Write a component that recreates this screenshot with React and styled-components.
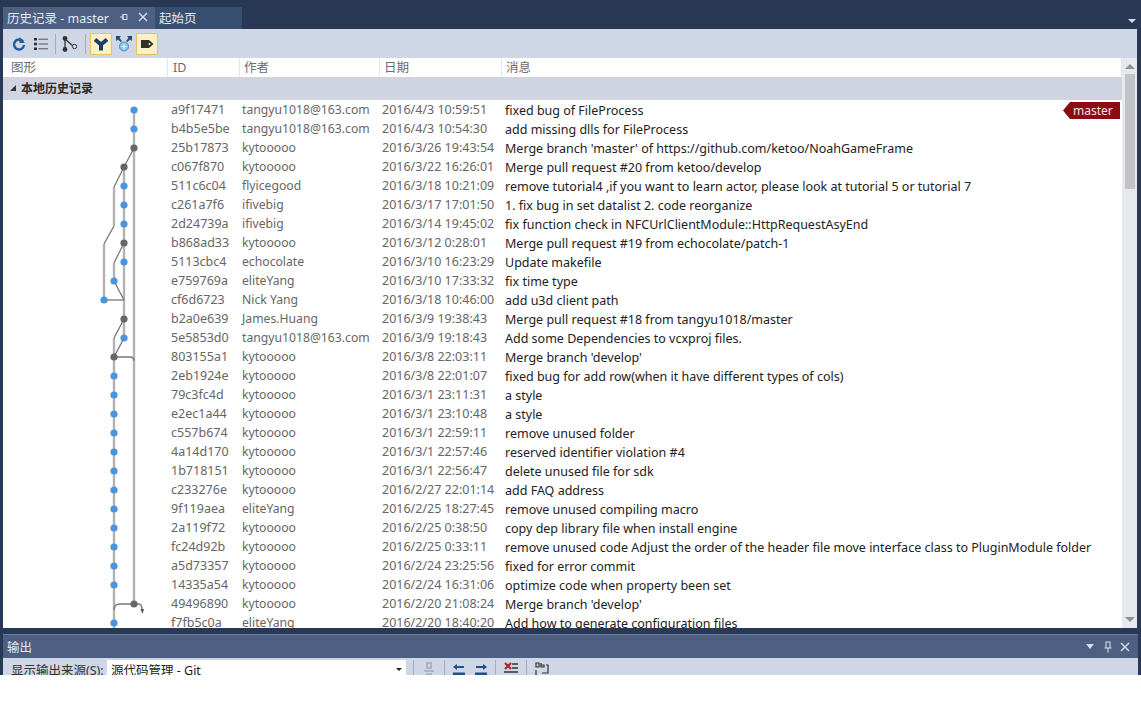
import React from 'react';
import styled, { createGlobalStyle } from 'styled-components';

const GlobalStyle = createGlobalStyle`
  html, body {
    margin: 0;
    background: #fff;
  }
  body {
    font-family: "Noto Sans", "Noto Sans CJK SC", sans-serif;
    font-size: 13px;
  }
`

const commits = [
  ['a9f17471', 'tangyu1018@163.com', '2016/4/3 10:59:51', 'fixed bug of FileProcess'],
  ['b4b5e5be', 'tangyu1018@163.com', '2016/4/3 10:54:30', 'add missing dlls for FileProcess'],
  ['25b17873', 'kytooooo', '2016/3/26 19:43:54', "Merge branch 'master' of https://github.com/ketoo/NoahGameFrame"],
  ['c067f870', 'kytooooo', '2016/3/22 16:26:01', 'Merge pull request #20 from ketoo/develop'],
  ['511c6c04', 'flyicegood', '2016/3/18 10:21:09', 'remove tutorial4 ,if you want to learn actor, please look at tutorial 5 or tutorial 7'],
  ['c261a7f6', 'ifivebig', '2016/3/17 17:01:50', '1. fix bug in set datalist 2. code reorganize'],
  ['2d24739a', 'ifivebig', '2016/3/14 19:45:02', 'fix function check in NFCUrlClientModule::HttpRequestAsyEnd'],
  ['b868ad33', 'kytooooo', '2016/3/12 0:28:01', 'Merge pull request #19 from echocolate/patch-1'],
  ['5113cbc4', 'echocolate', '2016/3/10 16:23:29', 'Update makefile'],
  ['e759769a', 'eliteYang', '2016/3/10 17:33:32', 'fix time type'],
  ['cf6d6723', 'Nick Yang', '2016/3/18 10:46:00', 'add u3d client path'],
  ['b2a0e639', 'James.Huang', '2016/3/9 19:38:43', 'Merge pull request #18 from tangyu1018/master'],
  ['5e5853d0', 'tangyu1018@163.com', '2016/3/9 19:18:43', 'Add some Dependencies to vcxproj files.'],
  ['803155a1', 'kytooooo', '2016/3/8 22:03:11', "Merge branch 'develop'"],
  ['2eb1924e', 'kytooooo', '2016/3/8 22:01:07', 'fixed bug for add row(when it have different types of cols)'],
  ['79c3fc4d', 'kytooooo', '2016/3/1 23:11:31', 'a style'],
  ['e2ec1a44', 'kytooooo', '2016/3/1 23:10:48', 'a style'],
  ['c557b674', 'kytooooo', '2016/3/1 22:59:11', 'remove unused folder'],
  ['4a14d170', 'kytooooo', '2016/3/1 22:57:46', 'reserved identifier violation #4'],
  ['1b718151', 'kytooooo', '2016/3/1 22:56:47', 'delete unused file for sdk'],
  ['c233276e', 'kytooooo', '2016/2/27 22:01:14', 'add FAQ address'],
  ['9f119aea', 'eliteYang', '2016/2/25 18:27:45', 'remove unused compiling macro'],
  ['2a119f72', 'kytooooo', '2016/2/25 0:38:50', 'copy dep library file when install engine'],
  ['fc24d92b', 'kytooooo', '2016/2/25 0:33:11', 'remove unused code Adjust the order of the header file move interface class to PluginModule folder'],
  ['a5d73357', 'kytooooo', '2016/2/24 23:25:56', 'fixed for error commit'],
  ['14335a54', 'kytooooo', '2016/2/24 16:31:06', 'optimize code when property been set'],
  ['49496890', 'kytooooo', '2016/2/20 21:08:24', "Merge branch 'develop'"],
  ['f7fb5c0a', 'eliteYang', '2016/2/20 18:40:20', 'Add how to generate configuration files'],
]

// x position and colour of the node on each row of the graph
const nodes = [
  [134, 'b'], [134, 'b'], [134, 'g'], [124, 'g'], [124, 'b'], [124, 'b'], [124, 'b'], [124, 'g'],
  [124, 'b'], [114, 'b'], [104, 'b'], [124, 'g'], [124, 'b'], [114, 'g'], [114, 'b'], [114, 'b'],
  [114, 'b'], [114, 'b'], [114, 'b'], [114, 'b'], [114, 'b'], [114, 'b'], [114, 'b'], [114, 'b'],
  [114, 'b'], [114, 'b'], [134, 'g'], [114, 'b'],
]

const Window = styled.div`
  height: 675px;
  background: #293955;
  display: flex;
  flex-direction: column;
  overflow: hidden;
`

const TabStrip = styled.div`
  height: 29px;
  padding: 7px 5px 0 3px;
  box-sizing: border-box;
  display: flex;
  align-items: stretch;
`

const Tab = styled.div`
  width: ${props => props.$width}px;
  background: ${props => props.$active ? '#4d6082' : '#364e6f'};
  color: #e4e9f2;
  padding: 0 0 2px 4px;
  display: flex;
  align-items: center;
  box-sizing: border-box;
  font-size: 12.5px;
  white-space: nowrap;
`

const TabTitle = styled.span`
  flex: 1;
`

const TabIcon = styled.svg`
  width: 12px;
  height: 12px;
  margin-right: ${props => props.$gap || 0}px;
  flex: none;
`

const StripMenu = styled.div`
  margin-left: auto;
  align-self: flex-end;
  margin-bottom: 6px;
  width: 0;
  height: 0;
  border-left: 4px solid transparent;
  border-right: 4px solid transparent;
  border-top: 4px solid #d5deee;
`

const DocPanel = styled.div`
  height: 599px;
  margin: 0 4px 0 3px;
  background: #cfd6e5;
  display: flex;
  flex-direction: column;
`

const Toolbar = styled.div`
  height: 29px;
  flex: none;
  padding-left: 5px;
  display: flex;
  align-items: center;
  background: #cfd6e5;
`

const ToolButton = styled.div`
  width: ${props => props.$width || 22}px;
  height: 22px;
  display: flex;
  align-items: center;
  justify-content: center;
  box-sizing: border-box;
  border: 1px solid ${props => props.$on ? '#e5c365' : 'transparent'};
  background: ${props => props.$on ? '#fdf0c4' : 'transparent'};
`

const ToolSep = styled.div`
  width: 1px;
  flex: none;
  height: ${props => props.$height ?? 20}px;
  margin: 0 ${props => props.$gap ?? 3}px;
  background: #a4adbf;
`

const Main = styled.div`
  flex: 1;
  min-height: 0;
  display: flex;
`

const Table = styled.div`
  flex: 1;
  min-width: 0;
  background: #fff;
  display: flex;
  flex-direction: column;
`

const HeaderRow = styled.div`
  height: 19px;
  flex: none;
  display: grid;
  grid-template-columns: 165px 72px 140px 122px 1fr;
  background: #fff;
`

const HeaderCell = styled.div`
  padding-left: ${props => props.$pad || 4}px;
  line-height: 19px;
  color: #6d6d6d;
  border-right: 1px solid #e3e5ea;
  font-size: 12.5px;
`

const GroupRow = styled.div`
  height: 23px;
  flex: none;
  padding: 0 0 2px 6px;
  box-sizing: border-box;
  display: flex;
  align-items: center;
  gap: 4px;
  background: #d0d3e0;
  color: #2b2b2b;
  font-weight: 700;
  font-size: 12px;
`

const GroupArrow = styled.svg`
  width: 8px;
  height: 8px;
`

const Body = styled.div`
  flex: 1;
  min-height: 0;
  display: flex;
  overflow: hidden;
`

const Graph = styled.svg`
  width: 165px;
  height: 532px;
  flex: none;
`

const Rows = styled.div`
  flex: 1;
  min-width: 0;
  position: relative;
`

const Row = styled.div`
  height: 19px;
  display: grid;
  grid-template-columns: 71px 140px 123px 1fr;
  align-items: center;
  padding-left: 3px;
  white-space: nowrap;
  font-size: 12.5px;
  color: #666;
`

const Author = styled.span`
  font-size: 12.2px;
`

const Message = styled.span`
  margin-top: 2px;
  color: #222;
  font-size: 12.5px;
`

const RefBadge = styled.div`
  position: absolute;
  top: 2px;
  right: 2px;
  width: 57px;
  height: 17px;
  padding-left: 10px;
  box-sizing: border-box;
  line-height: 17px;
  font-size: 12px;
  color: #f4e4e4;
  background: #8c0a12;
  clip-path: polygon(0 50%, 7px 0, 100% 0, 100% 100%, 7px 100%);
`

const Scrollbar = styled.div`
  width: 15px;
  flex: none;
  background: #e8e9ee;
  display: flex;
  flex-direction: column;
  align-items: center;
`

const ScrollArrow = styled.div`
  width: 0;
  height: 0;
  margin: ${props => props.$up ? '6px 0 5px' : 'auto 0 6px'};
  border-left: 5px solid transparent;
  border-right: 5px solid transparent;
  border-${props => props.$up ? 'bottom' : 'top'}: 5px solid #8e8e96;
`

const ScrollThumb = styled.div`
  width: 10px;
  height: 115px;
  background: #c2c3c9;
`

const OutputPanel = styled.div`
  margin: 6px 3px 0 3px;
  flex: 1;
  min-height: 0;
  display: flex;
  flex-direction: column;
`

const OutputTitle = styled.div`
  height: 24px;
  flex: none;
  padding: 0 7px 0 4px;
  display: flex;
  align-items: center;
  gap: 5px;
  box-sizing: border-box;
  background: #4d6082;
  border-top: 1px solid #6f80a0;
  color: #e4e9f2;
  font-size: 12.5px;
`

const OutputName = styled.span`
  flex: 1;
`

const TitleMenu = styled.svg`
  width: 10px;
  height: 6px;
  margin-right: 2px;
`

const OutputBar = styled.div`
  flex: 1;
  background: #cfd6e5;
  padding-left: 8px;
  padding-top: 2px;
  display: flex;
  align-items: flex-start;
  overflow: hidden;
  color: #333;
  font-size: 12.5px;
`

const OutputLabel = styled.span`
  width: 96px;
  line-height: 21px;
  white-space: nowrap;
`

const Combo = styled.div`
  width: 299px;
  height: 20px;
  padding: 0 4px;
  box-sizing: border-box;
  background: #fff;
  display: flex;
  align-items: flex-start;
  justify-content: space-between;
  line-height: 21px;
  color: #222;
`

const ComboArrow = styled.div`
  margin-top: 8px;
  width: 0;
  height: 0;
  border-left: 3px solid transparent;
  border-right: 3px solid transparent;
  border-top: 3px solid #222;
`

const OutputTools = styled.div`
  margin-left: 7px;
  display: flex;
  align-items: flex-start;
`

const OutputIcon = styled.svg`
  width: 16px;
  height: 16px;
  flex: none;
  margin: 1px ${props => props.$gap ?? 7}px 0;
`

const IconGroup = styled.div`
  padding: 0 6px;
  display: flex;
  gap: 6px;
`

const CommitGraph = () => {
  const track = '#b2b2b2'
  const link = '#777'
  return (
    <Graph viewBox="3 100 165 532">
      <g fill="none" stroke={track} strokeWidth="2.4">
        <path d="M134 110V604" />
        <path d="M124 167V338" />
        <path d="M114 187V226" />
        <path d="M104 244V300" />
        <path d="M114 263V281" />
        <path d="M114 338V640" />
      </g>
      <g fill="none" stroke={link} strokeWidth="1.3">
        <path d="M134 148L124 167L114 187" />
        <path d="M114 226L104 244" />
        <path d="M124 243L114 263" />
        <path d="M114 281L124 300" />
        <path d="M104 300H124" />
        <path d="M124 319L114 338" />
        <path d="M124 338L114 357" />
        <path d="M114 357H130Q134 357 134 361" />
        <path d="M114 610Q114 604 120 604H134" />
        <path d="M134 604H138Q142 604 142 609" />
      </g>
      <path d="M140.500 609h3.500l-1.500 5z" fill="#555" />
      {nodes.map(([x, kind], i) => (
        <circle key={i} cx={x} cy={110 + i * 19} r="3.6" fill={kind === 'b' ? '#4a94de' : '#666'} />
      ))}
    </Graph>
  )
}

const App = () => {
  return (
    <Window>
      <GlobalStyle />
      <TabStrip>
        <Tab $active $width={152}>
          <TabTitle>历史记录 - master</TabTitle>
          <TabIcon viewBox="0 0 12 12" $gap={7}>
            <path d="M2 6h3M5 3.500h4v5H5zM5 3v6" fill="none" stroke="#d8dfec" strokeWidth="1" />
          </TabIcon>
          <TabIcon viewBox="0 0 12 12" $gap={6}>
            <path d="M2 2l8 8M10 2l-8 8" fill="none" stroke="#d8dfec" strokeWidth="1.4" />
          </TabIcon>
        </Tab>
        <Tab $width={87}>起始页</Tab>
        <StripMenu />
      </TabStrip>
      <DocPanel>
        <Toolbar>
          <ToolButton>
            <svg width="16" height="16" viewBox="0 0 16 16">
              <path d="M12 5.500A5 5 0 1 0 13 9" fill="none" stroke="#1f5c9e" strokeWidth="2.4" />
              <path d="M8.500 1v6h5.500z" fill="#1f5c9e" />
            </svg>
          </ToolButton>
          <ToolButton>
            <svg width="16" height="16" viewBox="0 0 16 16">
              <path d="M1 2h3v2.500H1zM1 6.800h3v2.500H1zM1 11.500h3V14H1z" fill="#2b2b2b" />
              <path d="M5.500 3.200H15M5.500 8H15M5.500 12.800H15" stroke="#555" strokeWidth="1" />
            </svg>
          </ToolButton>
          <ToolSep />
          <ToolButton>
            <svg width="18" height="18" viewBox="0 0 18 18">
              <path d="M4 3v12M4 4l8 7" fill="none" stroke="#333" strokeWidth="1.3" />
              <circle cx="4" cy="3.500" r="2.400" fill="#333" />
              <circle cx="4" cy="14.500" r="2.400" fill="#333" />
              <circle cx="13.500" cy="11.500" r="2.200" fill="#d4dae7" stroke="#333" />
            </svg>
          </ToolButton>
          <ToolSep $gap={4} />
          <ToolButton $on>
            <svg width="18" height="16" viewBox="0 0 18 16">
              <path d="M3 3.500L9 8.500L15 3.500M9 8V14.500" fill="none" stroke="#173d68" strokeWidth="4" />
            </svg>
          </ToolButton>
          <ToolButton $width={24}>
            <svg width="18" height="18" viewBox="0 0 18 18">
              <path d="M1 1h5L4.500 3 7 6 5.500 7 3 4.500 1 6z" fill="#264a6e" />
              <path d="M17 1h-5l1.500 2L11 6l1.500 1L15 4.500 17 6z" fill="#264a6e" />
              <circle cx="9" cy="11.500" r="4.500" fill="#8fc7ea" stroke="#3f8ec9" />
              <path d="M6.500 11.500h5M9 9v5" stroke="#e8f4fb" strokeWidth="1" />
            </svg>
          </ToolButton>
          <ToolButton $on>
            <svg width="14" height="10" viewBox="0 0 14 10">
              <path d="M1 1h8l4.500 4L9 9H1z" fill="#33302a" />
              <circle cx="9.500" cy="5" r="1" fill="#fdf0c4" />
            </svg>
          </ToolButton>
        </Toolbar>
        <Main>
          <Table>
            <HeaderRow>
              <HeaderCell $pad={8}>图形</HeaderCell>
              <HeaderCell $pad={5}>ID</HeaderCell>
              <HeaderCell>作者</HeaderCell>
              <HeaderCell>日期</HeaderCell>
              <HeaderCell>消息</HeaderCell>
            </HeaderRow>
            <GroupRow>
              <GroupArrow viewBox="0 0 8 8">
                <path d="M7 1v6H1z" fill="#333" />
              </GroupArrow>
              本地历史记录
            </GroupRow>
            <Body>
              <CommitGraph />
              <Rows>
                {commits.map(c => (
                  <Row key={c[0]}>
                    <span>{c[0]}</span>
                    <Author>{c[1]}</Author>
                    <span>{c[2]}</span>
                    <Message>{c[3]}</Message>
                  </Row>
                ))}
                <RefBadge>master</RefBadge>
              </Rows>
            </Body>
          </Table>
          <Scrollbar>
            <ScrollArrow $up />
            <ScrollThumb />
            <ScrollArrow />
          </Scrollbar>
        </Main>
      </DocPanel>
      <OutputPanel>
        <OutputTitle>
          <OutputName>输出</OutputName>
          <TitleMenu viewBox="0 0 10 6">
            <path d="M1 0h8L5 5z" fill="#d8dfec" />
          </TitleMenu>
          <svg width="12" height="12" viewBox="0 0 12 12">
            <path d="M4 1h4v6H4zM2.500 7h7M6 7v4.500" fill="none" stroke="#d8dfec" strokeWidth="1.1" />
          </svg>
          <svg width="12" height="12" viewBox="0 0 12 12">
            <path d="M2 2l8 8M10 2l-8 8" fill="none" stroke="#d8dfec" strokeWidth="1.4" />
          </svg>
        </OutputTitle>
        <OutputBar>
          <OutputLabel>显示输出来源(S):</OutputLabel>
          <Combo>
            <span>源代码管理 - Git</span>
            <ComboArrow />
          </Combo>
          <OutputTools>
            <ToolSep $height={17} $gap={0} />
            <OutputIcon viewBox="0 0 16 16">
              <path d="M6 2h4v5H6zM3 10h10M5 13h6" fill="none" stroke="#a2a8b3" strokeWidth="1.5" />
            </OutputIcon>
            <ToolSep $height={17} $gap={0} />
            <IconGroup>
              <OutputIcon viewBox="0 0 16 16" $gap={0}>
                <path d="M2 6l4-3v2h7v2H6v2zM2 11.500h12V14H2z" fill="#1f4f8c" />
              </OutputIcon>
              <OutputIcon viewBox="0 0 16 16" $gap={0}>
                <path d="M14 6l-4-3v2H3v2h7v2zM2 11.500h12V14H2z" fill="#1f4f8c" />
              </OutputIcon>
            </IconGroup>
            <ToolSep $height={17} $gap={0} />
            <OutputIcon viewBox="0 0 16 16">
              <path d="M2 2l6 6M8 2L2 8" stroke="#b02020" strokeWidth="2" />
              <path d="M9 3h6M9 7h6M1 11h14" stroke="#333" strokeWidth="1.500" />
            </OutputIcon>
            <ToolSep $height={17} $gap={0} />
            <OutputIcon viewBox="0 0 16 16">
              <path d="M2 2h3v4H2zM7 2v4h3V4H7M2 9v5M12 4h2v8H8" fill="none" stroke="#333" strokeWidth="1.200" />
            </OutputIcon>
          </OutputTools>
        </OutputBar>
      </OutputPanel>
    </Window>
  )
}

export default App;
